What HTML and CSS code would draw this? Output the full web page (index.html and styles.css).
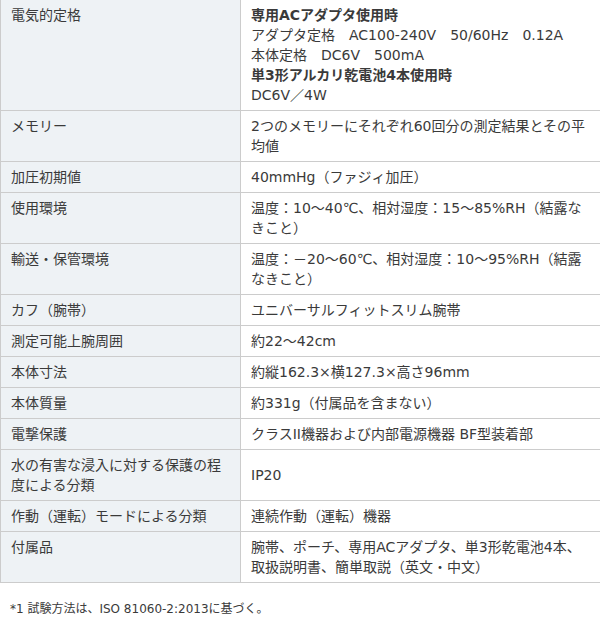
FILE: index.html
```html
<!DOCTYPE html>
<html lang="ja">
<head>
<meta charset="utf-8">
<title>仕様</title>
<link rel="stylesheet" href="styles.css">
</head>
<body>
<table class="spec">
  <colgroup><col class="col-label"><col class="col-value"></colgroup>
  <tbody>
    <tr><th>電気的定格</th><td><b>専用ACアダプタ使用時</b><br>アダプタ定格　AC100-240V　50/60Hz　0.12A<br>本体定格　DC6V　500mA<br><b>単3形アルカリ乾電池4本使用時</b><br>DC6V／4W</td></tr>
    <tr><th>メモリー</th><td>2つのメモリーにそれぞれ60回分の測定結果とその平均値</td></tr>
    <tr><th>加圧初期値</th><td>40mmHg（ファジィ加圧）</td></tr>
    <tr><th>使用環境</th><td>温度：10～40℃、相対湿度：15～85%RH（結露なきこと）</td></tr>
    <tr><th>輸送・保管環境</th><td>温度：－20～60℃、相対湿度：10～95%RH（結露なきこと）</td></tr>
    <tr><th>カフ（腕帯）</th><td>ユニバーサルフィットスリム腕帯</td></tr>
    <tr><th>測定可能上腕周囲</th><td>約22～42cm</td></tr>
    <tr><th>本体寸法</th><td>約縦162.3×横127.3×高さ96mm</td></tr>
    <tr><th>本体質量</th><td>約331g（付属品を含まない）</td></tr>
    <tr><th>電撃保護</th><td>クラスII機器および内部電源機器 BF型装着部</td></tr>
    <tr><th>水の有害な浸入に対する保護の程度による分類</th><td>IP20</td></tr>
    <tr><th>作動（運転）モードによる分類</th><td>連続作動（運転）機器</td></tr>
    <tr><th>付属品</th><td>腕帯、ポーチ、専用ACアダプタ、単3形乾電池4本、取扱説明書、簡単取説（英文・中文）</td></tr>
  </tbody>
</table>
<p class="note">*1 試験方法は、ISO 81060-2:2013に基づく。</p>
</body>
</html>
```

FILE: styles.css
```css
html, body {
  margin: 0;
  padding: 0;
  background: #ffffff;
}
body {
  font-family: "DejaVu Sans", "Noto Sans CJK JP", sans-serif;
  color: #3a3a3a;
  font-size: 14px;
  line-height: 20px;
}
.spec {
  width: 600px;
  table-layout: fixed;
  border-collapse: collapse;
  margin-top: -1px;
  border: 1px solid #cccccc;
}
.col-label { width: 240px; }
.col-value { width: 360px; }
.spec th,
.spec td {
  border: 1px solid #cccccc;
  padding: 5px 10px;
  font-weight: normal;
  text-align: left;
}
.spec th {
  background: #eef2f5;
  vertical-align: top;
}
.spec td {
  background: #ffffff;
  vertical-align: middle;
}
.spec b {
  font-weight: bold;
}
.note {
  margin: 17px 0 0 0;
  padding-left: 10px;
  font-size: 12px;
  line-height: 18px;
  color: #3a3a3a;
}
```
